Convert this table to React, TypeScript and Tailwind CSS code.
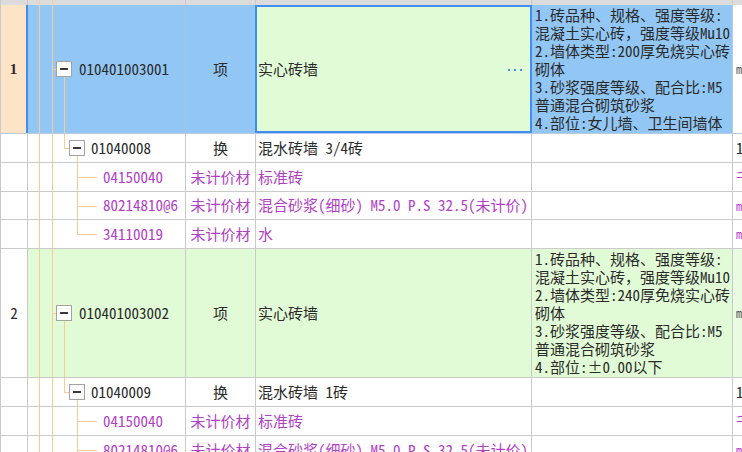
import React from "react";

type Kind = "mid" | "child" | "last";

const GRID = "border-[#cacaca]";
const OR = "bg-[#fccb91]";
const PURPLE = "text-[#b13fc6]";

function RootLines() {
  return (
    <>
      <div className={`absolute left-[11px] top-0 bottom-0 w-px ${OR}`} />
      <div className={`absolute left-[24px] top-0 bottom-0 w-px ${OR}`} />
      <div className={`absolute left-[24px] top-[64px] h-px w-[5px] ${OR}`} />
      <div className="absolute left-[28px] top-[56px] w-[16px] h-[16px] border border-[#a3a3a3] bg-white flex items-center justify-center">
        <div className="w-[8px] h-[2px] bg-[#3a3a3a]" />
      </div>
      <div className={`absolute left-[36px] top-[72px] bottom-0 w-px ${OR}`} />
    </>
  );
}

function SubLines({ kind }: { kind: Kind }) {
  return (
    <>
      <div className={`absolute left-[11px] top-0 bottom-0 w-px ${OR}`} />
      <div className={`absolute left-[24px] top-0 bottom-0 w-px ${OR}`} />
      {kind === "mid" && (
        <>
          <div className={`absolute left-[36px] top-0 h-[14px] w-px ${OR}`} />
          <div className={`absolute left-[36px] top-[14px] h-px w-[6px] ${OR}`} />
          <div className="absolute left-[41px] top-[6px] w-[16px] h-[16px] border border-[#a3a3a3] bg-white flex items-center justify-center">
            <div className="w-[8px] h-[2px] bg-[#3a3a3a]" />
          </div>
          <div className={`absolute left-[49px] top-[22px] bottom-0 w-px ${OR}`} />
        </>
      )}
      {kind === "child" && (
        <>
          <div className={`absolute left-[49px] top-0 bottom-0 w-px ${OR}`} />
          <div className={`absolute left-[49px] top-[14px] h-px w-[20px] ${OR}`} />
        </>
      )}
      {kind === "last" && (
        <>
          <div className={`absolute left-[49px] top-0 h-[14px] w-px ${OR}`} />
          <div className={`absolute left-[49px] top-[14px] h-px w-[20px] ${OR}`} />
        </>
      )}
    </>
  );
}

function Feature({ lines }: { lines: string[] }) {
  return (
    <div className="leading-[18px] whitespace-nowrap">
      {lines.map((l, i) => (
        <div key={i}>{l}</div>
      ))}
    </div>
  );
}

function SubRow({
  kind,
  code,
  type,
  name,
  f,
  fSmall,
  short,
}: {
  kind: Kind;
  code: string;
  type: string;
  name: string;
  f: string;
  fSmall?: boolean;
  short?: boolean;
}) {
  const purple = kind !== "mid";
  const color = purple ? PURPLE : "text-[#2a2a2a]";
  return (
    <div className={`flex ${short ? "h-[28px]" : "h-[29px]"} border-b ${GRID} bg-white`}>
      <div className={`w-[28px] shrink-0 border-l border-r ${GRID}`} />
      <div
        className={`relative w-[158px] shrink-0 border-r ${GRID} flex items-center ${
          kind === "mid" ? "pl-[63px]" : "pl-[75px]"
        } ${color} whitespace-nowrap`}
      >
        <SubLines kind={kind} />
        <span className="relative">{code}</span>
      </div>
      <div className={`w-[70px] shrink-0 border-r ${GRID} flex items-center justify-center whitespace-nowrap ${color}`}>
        {type}
      </div>
      <div className={`w-[276px] shrink-0 border-r ${GRID} flex items-center pl-[2px] whitespace-nowrap overflow-hidden ${color}`}>
        {name}
      </div>
      <div className={`w-[201px] shrink-0 border-r ${GRID}`} />
      <div
        className={`flex-1 flex items-center pl-[3px] whitespace-nowrap overflow-hidden ${color} ${
          fSmall ? "text-[12px]" : ""
        }`}
      >
        {f}
      </div>
    </div>
  );
}

const FEAT1 = [
  "1.砖品种、规格、强度等级:",
  "混凝土实心砖，强度等级Mu10",
  "2.墙体类型:200厚免烧实心砖",
  "砌体",
  "3.砂浆强度等级、配合比:M5",
  "普通混合砌筑砂浆",
  "4.部位:女儿墙、卫生间墙体",
];

const FEAT2 = [
  "1.砖品种、规格、强度等级:",
  "混凝土实心砖，强度等级Mu10",
  "2.墙体类型:240厚免烧实心砖",
  "砌体",
  "3.砂浆强度等级、配合比:M5",
  "普通混合砌筑砂浆",
  "4.部位:±0.00以下",
];

export default function App() {
  return (
    <div className="w-[742px] h-[452px] overflow-hidden bg-white text-[15px] text-[#2a2a2a] font-['Noto_Sans_Mono_CJK_SC','Noto_Sans_CJK_SC',sans-serif]">
      {/* partially visible row above */}
      <div className="flex h-[5px] bg-[#dcdcdc]">
        <div className={`w-[28px] shrink-0 border-l border-r ${GRID}`} />
        <div className={`relative w-[158px] shrink-0 border-r ${GRID}`}>
          <div className={`absolute left-[11px] top-0 bottom-0 w-px ${OR}`} />
          <div className={`absolute left-[24px] top-0 bottom-0 w-px ${OR}`} />
        </div>
        <div className={`w-[70px] shrink-0 border-r ${GRID}`} />
        <div className={`w-[276px] shrink-0 border-r ${GRID}`} />
        <div className={`w-[201px] shrink-0 border-r ${GRID}`} />
        <div className="flex-1" />
      </div>

      {/* row 1 (selected) */}
      <div className="flex h-[129px] border-b border-[#b7cade]">
        <div className="w-[28px] shrink-0 bg-[#fde4c6] border-l border-l-[#cacaca] border-r-2 border-r-[#3f8ef0] flex items-center justify-center font-bold text-[15px] font-['Liberation_Serif',serif]">
          1
        </div>
        <div className="relative w-[158px] shrink-0 bg-[#92c7f5] border-r border-[#a9c3db] flex items-center pl-[51px] whitespace-nowrap">
          <RootLines />
          <span className="relative">010401003001</span>
        </div>
        <div className="w-[69px] shrink-0 bg-[#92c7f5] flex items-center justify-center">项</div>
        <div className="relative w-[277px] shrink-0 bg-[#e2fbd7] border-2 border-[#3f8ef0] flex items-center pl-[1px]">
          实心砖墙
          <div className="absolute right-[8px] top-1/2 flex gap-[4px]">
            <div className="w-[2px] h-[2px] bg-[#3f8ef0]" />
            <div className="w-[2px] h-[2px] bg-[#3f8ef0]" />
            <div className="w-[2px] h-[2px] bg-[#3f8ef0]" />
          </div>
        </div>
        <div className="w-[201px] shrink-0 bg-[#92c7f5] border-r border-[#b9c9d8] flex items-center pl-[3px] overflow-hidden">
          <Feature lines={FEAT1} />
        </div>
        <div className="flex-1 bg-white flex items-center pl-[3px] text-[12px] text-[#555] whitespace-nowrap overflow-hidden">
          m³
        </div>
      </div>

      <SubRow kind="mid" code="01040008" type="换" name="混水砖墙 3/4砖" f="10m³" />
      <SubRow kind="child" code="04150040" type="未计价材" name="标准砖" f="千块" />
      <SubRow
        kind="child"
        code="80214810@6"
        type="未计价材"
        name="混合砂浆(细砂) M5.0 P.S 32.5(未计价)"
        f="m³"
        fSmall
        short
      />
      <SubRow kind="last" code="34110019" type="未计价材" name="水" f="m³" fSmall />

      {/* row 2 */}
      <div className={`flex h-[129px] border-b ${GRID}`}>
        <div className={`w-[28px] shrink-0 bg-white border-l border-r ${GRID} flex items-center justify-center`}>2</div>
        <div className={`relative w-[158px] shrink-0 bg-[#e2fbd7] border-r ${GRID} flex items-center pl-[51px] whitespace-nowrap`}>
          <RootLines />
          <span className="relative">010401003002</span>
        </div>
        <div className={`w-[70px] shrink-0 bg-[#e2fbd7] border-r ${GRID} flex items-center justify-center`}>项</div>
        <div className={`w-[276px] shrink-0 bg-[#e2fbd7] border-r ${GRID} flex items-center pl-[2px]`}>实心砖墙</div>
        <div className={`w-[201px] shrink-0 bg-[#e2fbd7] border-r ${GRID} flex items-center pl-[3px] overflow-hidden`}>
          <Feature lines={FEAT2} />
        </div>
        <div className="flex-1 bg-[#e9fbe0] flex items-center pl-[3px] text-[12px] text-[#555] whitespace-nowrap overflow-hidden">
          m³
        </div>
      </div>

      <SubRow kind="mid" code="01040009" type="换" name="混水砖墙 1砖" f="10m³" />
      <SubRow kind="child" code="04150040" type="未计价材" name="标准砖" f="千块" />
      <SubRow
        kind="child"
        code="80214810@6"
        type="未计价材"
        name="混合砂浆(细砂) M5.0 P.S 32.5(未计价)"
        f="m³"
        fSmall
      />
    </div>
  );
}
